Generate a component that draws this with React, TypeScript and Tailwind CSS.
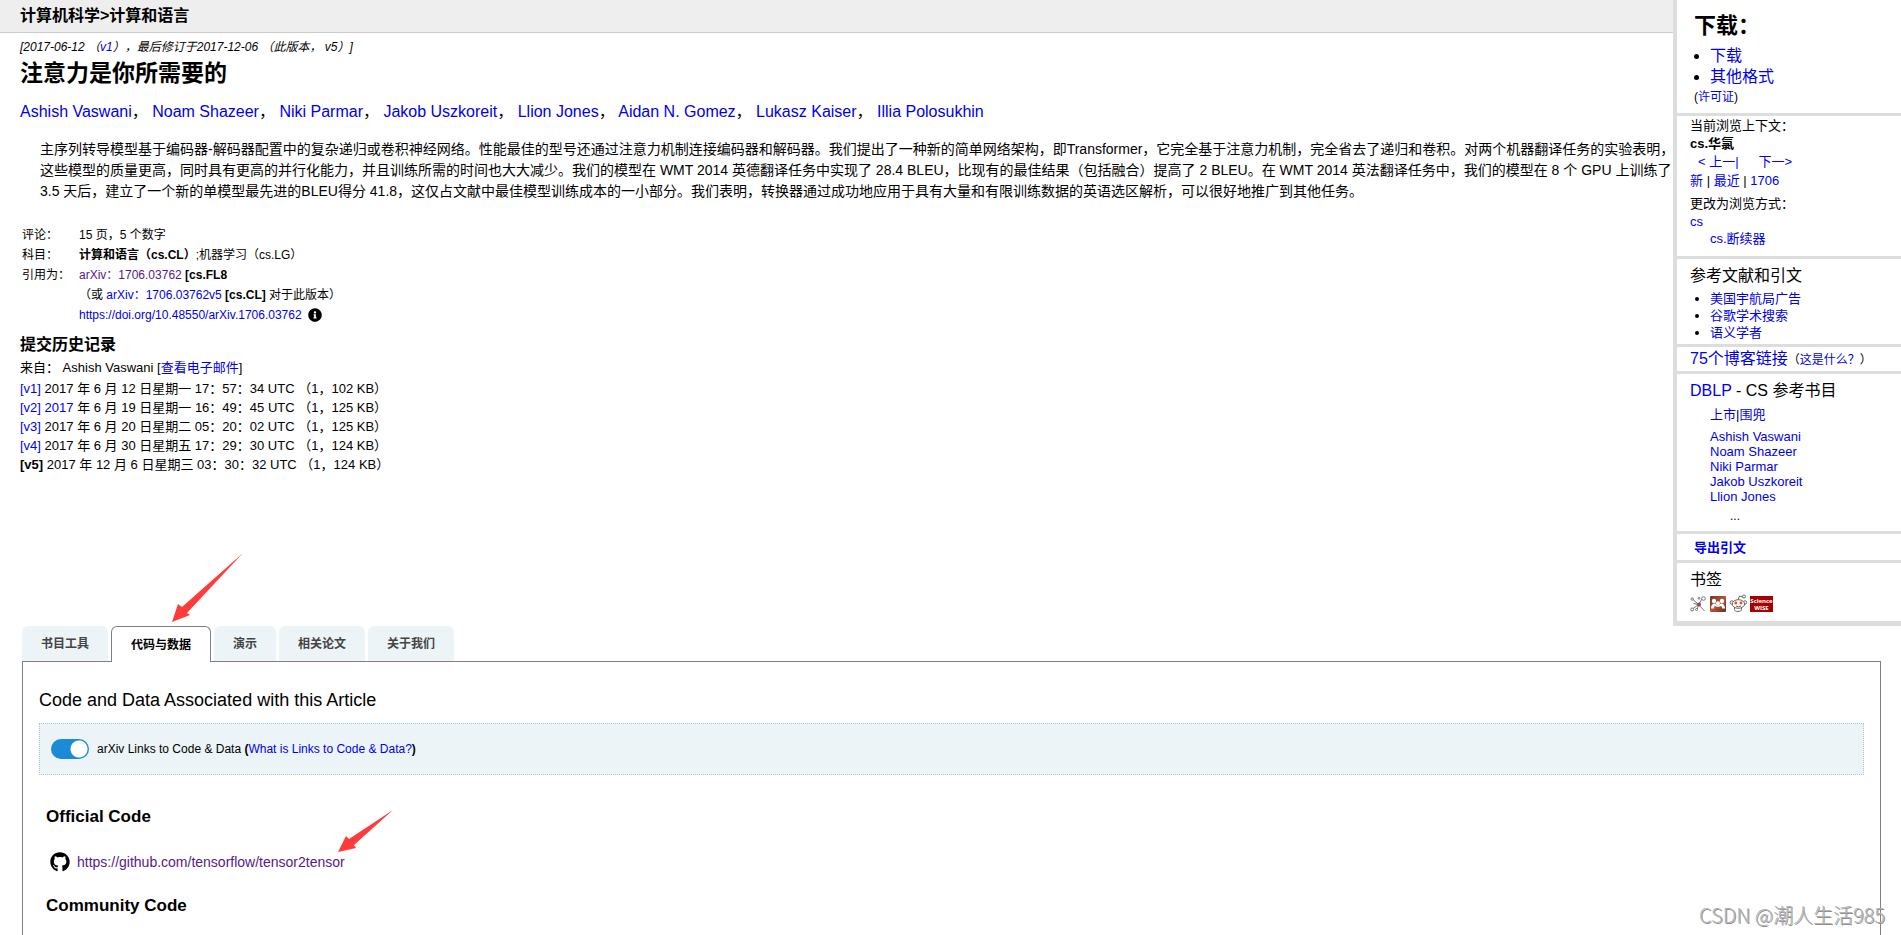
import { useState } from "react";
import type { ReactNode } from "react";
import { FaGithub, FaInfoCircle } from "react-icons/fa";

function A({ children, visited = false }: { children: ReactNode; visited?: boolean }) {
  return (
    <a href="#" className={visited ? "text-[#551a8b]" : "text-[#0000ee]"}>
      {children}
    </a>
  );
}

const authors = [
  "Ashish Vaswani",
  "Noam Shazeer",
  "Niki Parmar",
  "Jakob Uszkoreit",
  "Llion Jones",
  "Aidan N. Gomez",
  "Lukasz Kaiser",
  "Illia Polosukhin",
];

const history = [
  { v: "[v1]", linked: "", rest: "2017 年 6 月 12 日星期一 17：57：34 UTC （1，102 KB）" },
  { v: "[v2]", linked: "2017", rest: "年 6 月 19 日星期一 16：49：45 UTC （1，125 KB）" },
  { v: "[v3]", linked: "", rest: "2017 年 6 月 20 日星期二 05：20：02 UTC （1，125 KB）" },
  { v: "[v4]", linked: "", rest: "2017 年 6 月 30 日星期五 17：29：30 UTC （1，124 KB）" },
  { v: "[v5]", linked: "", rest: "2017 年 12 月 6 日星期三 03：30：32 UTC （1，124 KB）" },
];

const tabs = ["书目工具", "代码与数据", "演示", "相关论文", "关于我们"];

function Paper() {
  return (
    <main className="min-w-0 flex-1">
      <div className="h-[33px] border-b border-[#cccccc] bg-[#eeeeee] pl-5 text-base leading-[31px] font-bold">
        计算机科学&gt;计算和语言
      </div>
      <div className="px-5 pt-1">
        <p className="text-xs leading-5 italic [text-spacing-trim:space-all]">
          [2017-06-12 （<A>v1</A>），最后修订于2017-12-06 （此版本， v5）]
        </p>
        <h1 className="text-[23px] leading-8 font-bold">注意力是你所需要的</h1>
        <p className="mt-[11px] text-base leading-6">
          {authors.map((name, i) => (
            <span key={name}>
              <A>{name}</A>
              {i < authors.length - 1 && "， "}
            </span>
          ))}
        </p>
      </div>
      <blockquote className="mt-[15px] pl-10 text-sm leading-[21px] whitespace-nowrap">
        主序列转导模型基于编码器-解码器配置中的复杂递归或卷积神经网络。性能最佳的型号还通过注意力机制连接编码器和解码器。我们提出了一种新的简单网络架构，即Transformer，它完全基于注意力机制，完全省去了递归和卷积。对两个机器翻译任务的实验表明，
        <br />
        这些模型的质量更高，同时具有更高的并行化能力，并且训练所需的时间也大大减少。我们的模型在 WMT 2014 英德翻译任务中实现了 28.4 BLEU，比现有的最佳结果（包括融合）提高了 2 BLEU。在 WMT 2014 英法翻译任务中，我们的模型在 8 个 GPU 上训练了
        <br />
        3.5 天后，建立了一个新的单模型最先进的BLEU得分 41.8，这仅占文献中最佳模型训练成本的一小部分。我们表明，转换器通过成功地应用于具有大量和有限训练数据的英语选区解析，可以很好地推广到其他任务。
      </blockquote>
      <table className="mt-[23px] ml-[22px] text-xs leading-5">
        <tbody>
          <tr>
            <td className="w-[57px] p-0">评论：</td>
            <td className="p-0">15 页，5 个数字</td>
          </tr>
          <tr>
            <td className="p-0">科目：</td>
            <td className="p-0">
              <b>计算和语言（cs.CL）</b>;机器学习（cs.LG）
            </td>
          </tr>
          <tr>
            <td className="p-0">引用为：</td>
            <td className="p-0">
              <A visited>arXiv：1706.03762</A> <b>[cs.FL8</b>
            </td>
          </tr>
          <tr>
            <td className="p-0" />
            <td className="p-0">
              （或 <A>arXiv：1706.03762v5</A> <b>[cs.CL]</b> 对于此版本）
            </td>
          </tr>
          <tr>
            <td className="p-0" />
            <td className="flex items-center gap-1.5 p-0">
              <A>https://doi.org/10.48550/arXiv.1706.03762</A>
              <FaInfoCircle size={14} />
            </td>
          </tr>
        </tbody>
      </table>
      <section className="mt-2 px-5">
        <h2 className="text-base leading-6 font-bold">提交历史记录</h2>
        <p className="text-[13px] leading-[22px]">
          来自： Ashish Vaswani [<A>查看电子邮件</A>]
        </p>
        <ul className="text-[13px] leading-[19px]">
          {history.map((h, i) => (
            <li key={h.v}>
              {i === history.length - 1 ? <b>{h.v}</b> : <A>{h.v}</A>}{" "}
              {h.linked && (
                <>
                  <A>{h.linked}</A>{" "}
                </>
              )}
              {h.rest}
            </li>
          ))}
        </ul>
      </section>
    </main>
  );
}

function Mark({ label, children, wide = false }: { label: string; children: ReactNode; wide?: boolean }) {
  return (
    <a href="#" aria-label={label}>
      <svg
        className={wide ? "h-4 w-[23px]" : "h-4 w-4 overflow-visible"}
        viewBox={wide ? "0 0 23 16" : "0 0 16 16"}
      >
        {children}
      </svg>
    </a>
  );
}

function Bookmarks() {
  return (
    <div className="mt-1 flex gap-1">
      <Mark label="BibSonomy">
        <g fill="none" stroke="#777777">
          <path d="M3 3.5L8.5 8.5L12 3M8.5 8.5L2.5 13M8.5 8.5L14.5 15M3.5 7.5L8.5 8.5L7 14" />
          <circle cx="13.5" cy="2.5" r="1.8" fill="#ffffff" />
          <circle cx="2.2" cy="13.5" r="1.5" fill="#ffffff" />
          <circle cx="2.2" cy="3" r="1.2" fill="#ffffff" />
          <circle cx="9" cy="2.2" r="1" fill="#ffffff" />
          <circle cx="6.5" cy="13.5" r="1" fill="#ffffff" />
        </g>
        <circle cx="9" cy="8.5" r="2" fill="#a03a68" />
      </Mark>
      <Mark label="Mendeley">
        <defs>
          <linearGradient id="mendeley" x1="0" y1="0" x2="1" y2="1">
            <stop offset="0" stopColor="#6e3a2c" />
            <stop offset="0.5" stopColor="#b4532f" />
            <stop offset="1" stopColor="#6a2d1e" />
          </linearGradient>
        </defs>
        <rect width="16" height="16" rx="1" fill="url(#mendeley)" />
        <g fill="#ffffff">
          <circle cx="4" cy="5" r="2.2" />
          <circle cx="12" cy="5" r="2.2" />
          <circle cx="8" cy="7.2" r="2" />
          <path d="M1 12.5c0-3 1.500-5 3.500-5 1.500 0 2 2 3.500 2s2-2 3.500-2c2 0 3.500 2 3.500 5h-3c0-1.500-.500-2.500-1-2.500-.800 0-1.500 1-3 1s-2.200-1-3-1c-.500 0-1 1-1 2.500z" />
        </g>
      </Mark>
      <Mark label="Reddit">
        <g fill="#ffffff" stroke="#666666">
          <path d="M8 4L9.500 0L13 1" fill="none" />
          <circle cx="14" cy="0.5" r="1.5" />
          <path d="M4.500 11v2.500c0 1 1 2 3.500 2s3.500-1 3.500-2V11" />
          <circle cx="1.8" cy="6.5" r="1.7" />
          <circle cx="15" cy="6.5" r="1.7" />
          <ellipse cx="8.4" cy="8" rx="6.2" ry="4.300" />
          <path d="M6 10q2.400 1.500 5 0" fill="none" />
        </g>
        <circle cx="5.8" cy="7" r="1.4" fill="#ff4500" />
        <circle cx="11" cy="7" r="1.4" fill="#ff4500" />
      </Mark>
      <Mark label="ScienceWISE" wide>
        <rect width="23" height="16" fill="#a60000" />
        <g fill="#ffffff" fontFamily="Open Sans, sans-serif" fontSize="6" fontWeight="700" textAnchor="middle">
          <text x="11.5" y="7">Science</text>
          <text x="11.5" y="14">WISE</text>
        </g>
      </Mark>
    </div>
  );
}

function Sidebar() {
  return (
    <aside className="w-[228px] shrink-0 divide-y-[3px] divide-[#dddddd] border-b-[5px] border-l-4 border-[#dddddd] text-[13px]">
      <section className="px-[17px] pt-2 pb-[5px]">
        <h2 className="mb-px text-[22px] leading-9 font-bold">下载：</h2>
        <ul className="list-disc pl-4 text-base leading-[21px] marker:text-black">
          <li>
            <A>下载</A>
          </li>
          <li>
            <A>其他格式</A>
          </li>
        </ul>
        <p className="text-xs leading-[21px]">
          (<A>许可证</A>)
        </p>
      </section>
      <section className="px-[13px] pt-px pb-[9px]">
        <h3 className="leading-[18px]">当前浏览上下文：</h3>
        <p className="leading-[17px] font-bold">cs.华氯</p>
        <p className="flex gap-5 pl-2 leading-[19px]">
          <A>&lt; 上一|</A>
          <A>下一&gt;</A>
        </p>
        <p className="leading-5">
          <A>新</A> | <A>最近</A> | <A>1706</A>
        </p>
        <h3 className="mt-1 leading-[18px]">更改为浏览方式：</h3>
        <p className="leading-[18px]">
          <A>cs</A>
        </p>
        <p className="pl-5 leading-4">
          <A>cs.断续器</A>
        </p>
      </section>
      <section className="px-[13px] pt-1 pb-[3px]">
        <h3 className="mb-px text-base leading-[26px]">参考文献和引文</h3>
        <ul className="list-disc pl-5 leading-[17px] marker:text-black">
          <li>
            <A>美国宇航局广告</A>
          </li>
          <li>
            <A>谷歌学术搜索</A>
          </li>
          <li>
            <A>语义学者</A>
          </li>
        </ul>
      </section>
      <section className="px-[13px] text-base leading-6">
        <A>75个博客链接</A>
        <span className="text-xs">
          （<A>这是什么？</A>）
        </span>
      </section>
      <section className="px-[13px] pt-[5px] pb-[2px]">
        <h3 className="text-base leading-6">
          <A>DBLP</A> - CS 参考书目
        </h3>
        <p className="pl-5 leading-6">
          <A>上市</A>|<A>围兜</A>
        </p>
        <ul className="mt-0.5 pl-5 leading-[15px]">
          {authors.slice(0, 5).map((name) => (
            <li key={name}>
              <A>{name}</A>
            </li>
          ))}
        </ul>
        <p className="pl-10 text-xs leading-[25px]">...</p>
      </section>
      <section className="px-[17px] pt-px leading-[25px] font-bold">
        <A>导出引文</A>
      </section>
      <section className="px-[13px] pt-[5px] pb-[9px]">
        <h3 className="text-base leading-6">书签</h3>
        <Bookmarks />
      </section>
    </aside>
  );
}

function Tools() {
  const [active, setActive] = useState(1);
  const [on, setOn] = useState(true);
  return (
    <div className="mr-5 ml-[22px]">
      <div role="tablist" className="flex gap-[3px]">
        {tabs.map((t, i) => (
          <button
            key={t}
            role="tab"
            aria-selected={i === active}
            onClick={() => setActive(i)}
            className={
              i === active
                ? "relative z-10 -mb-px h-9 rounded-t-md border border-b-0 border-[#808080] bg-white px-[19px] text-xs font-bold text-black"
                : "h-[35px] rounded-t-md bg-[#ecf4f8] px-[19px] text-xs font-bold text-[#444444]"
            }
          >
            {t}
          </button>
        ))}
      </div>
      <div role="tabpanel" className="border border-b-0 border-[#808080] px-4 pb-5">
        <h2 className="pt-[26px] text-lg leading-6">Code and Data Associated with this Article</h2>
        <div className="mt-[11px] flex h-[52px] items-center gap-2 border border-dotted border-[#a9c8d8] bg-[#ecf4f8] px-[11px]">
          <input
            id="links"
            type="checkbox"
            checked={on}
            onChange={() => setOn(!on)}
            className="h-5 w-[38px] appearance-none rounded-full bg-[#aaaaaa] bg-[radial-gradient(circle_at_28px_10px,#ffffff_8px,transparent_9px)] checked:bg-[#1c8bd6]"
          />
          <p className="text-xs">
            <label htmlFor="links">arXiv Links to Code &amp; Data</label> <b>(</b>
            <A>What is Links to Code &amp; Data?</A>
            <b>)</b>
          </p>
        </div>
        <div className="px-[7px]">
          <h3 className="mt-[30px] text-[17px] leading-6 font-bold">Official Code</h3>
          <p className="mt-[21px] flex items-center gap-[7px] pl-1 text-sm leading-6">
            <FaGithub size={20} />
            <A visited>https://github.com/tensorflow/tensor2tensor</A>
          </p>
          <h3 className="mt-5 text-[17px] leading-6 font-bold">Community Code</h3>
        </div>
      </div>
    </div>
  );
}

export default function App() {
  return (
    <div className="relative h-screen overflow-hidden bg-white font-['Liberation_Sans','Noto_Sans_CJK_SC',sans-serif] text-black">
      <div className="flex items-start">
        <Paper />
        <Sidebar />
      </div>
      <Tools />
      <svg className="pointer-events-none absolute top-[553px] left-[172px] h-[70px] w-[72px]" viewBox="0 0 72 70" fill="#ff3b3b">
        <path d="M71 0L15 60L18 62L0 69L6 51L10 54Z" />
      </svg>
      <svg className="pointer-events-none absolute top-[809px] left-[338px] h-[44px] w-[56px]" viewBox="0 0 56 44" fill="#ff3b3b">
        <path d="M55 1L16 36L18 39L0 43L8 27L11 30Z" />
      </svg>
      <p className="pointer-events-none absolute right-4 bottom-[5px] font-['Noto_Sans_CJK_SC',sans-serif] text-xl leading-[30px] font-light text-[#b4b4b4] [text-shadow:1px_1px_0_#909090]">
        CSDN @潮人生活985
      </p>
    </div>
  );
}
